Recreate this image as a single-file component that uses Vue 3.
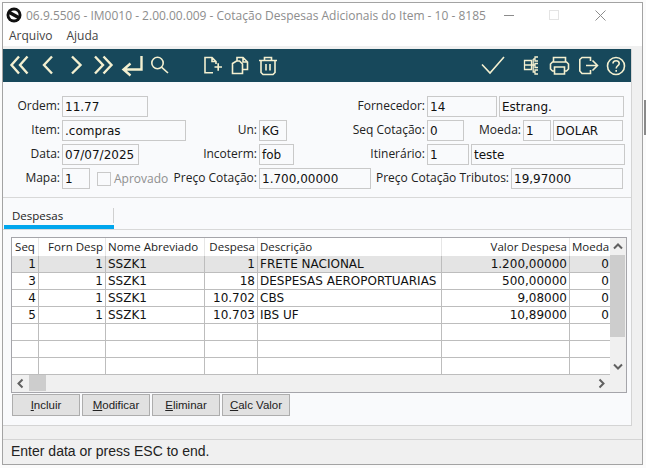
<script setup>
const form = [
  [
    { l: 'Ordem:', lw: 57, v: '11.77', w: 86 },
    { l: 'Fornecedor:', lw: 277, v: '14', w: 70 },
    { v: 'Estrang.', w: 125 }
  ],
  [
    { l: 'Item:', lw: 57, v: '.compras', w: 124 },
    { l: 'Un:', lw: 71, v: 'KG', w: 28 },
    { l: 'Seq Cotação:', lw: 138, v: '0', w: 37 },
    { l: 'Moeda:', lw: 57, v: '1', w: 28 },
    { v: 'DOLAR', w: 70 }
  ],
  [
    { l: 'Data:', lw: 57, v: '07/07/2025', w: 77 },
    { l: 'Incoterm:', lw: 118, v: 'fob', w: 35 },
    { l: 'Itinerário:', lw: 131, v: '1', w: 42 },
    { v: 'teste', w: 154 }
  ]
]
const cols = [
  { t: 'Seq', a: 'c' },
  { t: 'Forn Desp', a: 'r' },
  { t: 'Nome Abreviado', a: 'l' },
  { t: 'Despesa', a: 'r' },
  { t: 'Descrição', a: 'l' },
  { t: 'Valor Despesa', a: 'r' },
  { t: 'Moeda', a: 'r' }
]
const rows = [
  ['1', '1', 'SSZK1', '1', 'FRETE NACIONAL', '1.200,00000', '0'],
  ['3', '1', 'SSZK1', '18', 'DESPESAS AEROPORTUARIAS', '500,00000', '0'],
  ['4', '1', 'SSZK1', '10.702', 'CBS', '9,08000', '0'],
  ['5', '1', 'SSZK1', '10.703', 'IBS UF', '10,89000', '0'],
  ['', '', '', '', '', '', ''],
  ['', '', '', '', '', '', ''],
  ['', '', '', '', '', '', '']
]
const aligns = ['r', 'r', 'l', 'r', 'l', 'r', 'r']
const buttons = [
  ['I', 'ncluir'],
  ['M', 'odificar'],
  ['E', 'liminar'],
  ['C', 'alc Valor']
]
</script>

<template>
  <div class="page">
    <div class="window">
      <header class="titlebar">
        <svg class="logo" viewBox="0 0 16 16" width="16" height="16">
          <circle cx="8" cy="8" r="7.5" fill="#111" />
          <circle cx="8" cy="8" r="4.6" fill="#fff" />
          <path d="M3 5.2 L13 10.8" stroke="#111" stroke-width="3.4" />
        </svg>
        <span class="title">06.9.5506 - IM0010 - 2.00.00.009 - Cotação Despesas Adicionais do Item - 10 - 8185</span>
        <div class="controls">
          <svg viewBox="0 0 120 24" width="120" height="24" fill="none">
            <path d="M0 12.5H10" stroke="#8c8c8c" />
            <rect x="45.5" y="7.5" width="9" height="9" stroke="#e4e4e4" />
            <path d="M91.5 7.5L101.5 17.5M101.5 7.5L91.5 17.5" stroke="#8c8c8c" />
          </svg>
        </div>
      </header>
      <nav class="menu">
        <span>Arquivo</span>
        <span>Ajuda</span>
      </nav>
      <div class="band"></div>

      <main class="panel">
        <div class="toolbar">
          <svg class="ic" viewBox="5 49 28 33"><path d="M19 56.5 11.5 65 19 73.5M27.5 56.5 20 65 27.5 73.5" class="s25" /></svg>
          <svg class="ic" viewBox="33 49 28 33"><path d="M52 56.5 44 65 52 73.5" class="s25" /></svg>
          <svg class="ic" viewBox="61 49 28 33"><path d="M72 56.5 80.5 65 72 73.5" class="s25" /></svg>
          <svg class="ic" viewBox="89 49 28 33"><path d="M95 56.5 103 65 95 73.5M103.500 56.5 111.500 65 103.500 73.5" class="s25" /></svg>
          <svg class="ic" viewBox="117 49 28 33"><path d="M141.500 56V69.500H124M130.500 63.500 123.500 69.500 130.500 75.500" class="s25" /></svg>
          <svg class="ic" viewBox="145 49 28 33"><circle cx="157.500" cy="63" r="5.700" class="s15" /><path d="M161.500 67.200 168 73" class="s15" /></svg>
          <svg class="ic g2" viewBox="197 49 28 33"><path d="M213 72.800H205V57.500H212L216 61.500V64M212 57.500V61.500H216M214.500 67H222M218.200 63.200V70.800" class="s15" /></svg>
          <svg class="ic" viewBox="225 49 28 33"><path d="M237 61V57.500H243L247.500 62V69.500H242.500M243 57.500V62H247.500M232.500 63.500 236.500 61H239.500L242.500 64V73.500H232.500Z" class="s15" /></svg>
          <svg class="ic" viewBox="253 49 28 33"><path d="M259 60.500H277M264.500 60V57.500H271.500V60M261 60.500V72.500L263 74.500H273L275 72.500V60.500M266 64V70.500M270 64V70.500" class="s15" /></svg>
          <span class="spacer"></span>
          <svg class="ic" viewBox="478 49 28 33"><path d="M481 64.500 489 73 503 57" class="s15" /></svg>
          <svg class="ic tree" viewBox="509 49 28 33"><path d="M523.500 60.500H530.500V69.500H523.500ZM523.500 65H530.500M534 57H538.500V61H534ZM534 63.500H538.500V67.500H534ZM534 70H538.500V74H534ZM530.500 65H534M532.200 59V72H534M532.200 59H534" class="s1" /></svg>
          <svg class="ic print" viewBox="544 49 28 33"><path d="M552.500 62V57.500H564.500V62M553 71H551.500L549.500 69V64L551.500 62H565.500L567.500 64V69L565.500 71H564M553.500 67H563.500V74H553.500Z" class="s15" /></svg>
          <svg class="ic exit" viewBox="574 49 28 33"><path d="M589.500 61V57.500H581L578.800 59.500V71L581 73.500H589.500V70M585 65.500H596M591.500 60.500 596.500 65.500 591.500 70.500" class="s15" /></svg>
          <svg class="ic help" viewBox="601 49 28 33"><circle cx="615" cy="66" r="8.500" class="s15" /><path d="M612 63.500C612 59.800 618.200 59.800 618.200 63.500C618.200 65.800 615.200 65.500 615.200 68.500M615.200 70V71.800" class="s15" /></svg>
        </div>

        <section class="form">
          <div v-for="(row, i) in form" :key="i" class="row">
            <template v-for="(f, j) in row" :key="j">
              <label v-if="f.l" class="lab" :style="{ width: f.lw + 'px' }">{{ f.l }}</label>
              <div class="field" :class="{ next: !f.l }" :style="{ width: f.w + 'px' }">{{ f.v }}</div>
            </template>
          </div>
          <div class="row">
            <label class="lab first">Mapa:</label>
            <div class="field mapa">1</div>
            <span class="check"></span>
            <span class="aprov">Aprovado</span>
            <label class="lab preco">Preço Cotação:</label>
            <div class="field pv">1.700,00000</div>
            <label class="lab trib">Preço Cotação Tributos:</label>
            <div class="field tv">19,97000</div>
          </div>
        </section>

        <div class="tabs">
          <div class="tab"><span>Despesas</span></div>
        </div>

        <section class="content">
          <div class="table">
            <div class="tbody">
              <div class="main">
                <div class="grid head">
                  <div v-for="c in cols" :key="c.t" class="hc" :class="c.a">{{ c.t }}</div>
                </div>
                <div v-for="(r, i) in rows" :key="i" class="grid line" :class="{ sel: i === 0 }">
                  <div v-for="(c, k) in r" :key="k" class="td" :class="aligns[k]">{{ c }}</div>
                </div>
              </div>
              <div class="vbar">
                <svg class="arr" viewBox="0 0 16 17" width="16" height="17"><path d="M4 10.500 8 6.500 12 10.500" class="a" /></svg>
                <div class="vthumb"></div>
                <div class="vrest"></div>
                <svg class="arr" viewBox="0 0 16 17" width="16" height="17"><path d="M4 6.500 8 10.500 12 6.500" class="a" /></svg>
              </div>
            </div>
            <div class="hbar">
              <svg class="arr" viewBox="0 0 17 17" width="17" height="17"><path d="M10.500 4.500 6.500 8.500 10.500 12.500" class="a" /></svg>
              <div class="hthumb"></div>
              <div class="vrest"></div>
              <svg class="arr" viewBox="0 0 17 17" width="17" height="17"><path d="M6.500 4.500 10.500 8.500 6.500 12.500" class="a" /></svg>
              <div class="corner"></div>
            </div>
          </div>
          <div class="buttons">
            <button v-for="b in buttons" :key="b[0]" class="btn"><u>{{ b[0] }}</u>{{ b[1] }}</button>
          </div>
        </section>
      </main>

      <div class="gap"></div>
      <footer class="status">Enter data or press ESC to end.</footer>
    </div>
    <div class="strip"><div class="strip-thumb"></div></div>
  </div>
</template>

<style>
html, body { margin: 0; background: #fbfbfb; }
</style>

<style scoped>
.page {
  display: flex;
  width: 646px;
  height: 468px;
  padding: 2px 0 0 2px;
  box-sizing: border-box;
  overflow: hidden;
}
.window {
  width: 641px;
  height: 463px;
  box-sizing: border-box;
  border: 1px solid #a3a3a3;
  background: #f0f0f0;
  display: flex;
  flex-direction: column;
  flex: none;
}
.strip { flex: none; width: 3px; padding-top: 98px; }
.strip-thumb { width: 2px; height: 35px; margin-left: 1px; background: #8a8a8a; }

.titlebar {
  height: 24px;
  background: #fff;
  display: flex;
  align-items: center;
  flex: none;
  padding-left: 3px;
  position: relative;
}
.logo { margin-right: 4px; flex: none; }
.title { font: 12px "Open Sans", sans-serif; color: #8d8d8d; white-space: nowrap; }
.controls { margin-left: auto; margin-right: 18px; height: 24px; }
.controls svg { display: block; }

.menu {
  height: 19px;
  background: #fff;
  flex: none;
  display: flex;
  gap: 14px;
  padding-left: 6px;
  font: 12px "Open Sans", sans-serif;
  color: #444;
  line-height: 17px;
}
.band { height: 3px; flex: none; }

.panel {
  width: 629px;
  height: 377px;
  flex: none;
  box-sizing: border-box;
  background: #f9fafc;
  border-right: 1px solid #d4d4d4;
  border-bottom: 1px solid #d4d4d4;
  display: flex;
  flex-direction: column;
}

.toolbar {
  height: 33px;
  flex: none;
  background: #17485b;
  display: flex;
  padding-left: 2px;
}
.ic { width: 28px; height: 33px; flex: none; display: block; fill: none; stroke: #f4f0d0; }
.s25 { stroke-width: 2.4; }
.s15 { stroke-width: 1.6; }
.s1 { stroke-width: 1.3; }
.g2 { margin-left: 24px; }
.spacer { flex: 1; }
.tree { margin-left: 3px; }
.print { margin-left: 7px; }
.exit { margin-left: 2px; }
.help { margin-left: -1px; margin-right: 1px; }

.form {
  height: 116px;
  flex: none;
  box-sizing: border-box;
  border-bottom: 1px solid #d8d8d8;
  padding-top: 14px;
  display: flex;
  flex-direction: column;
  gap: 3px;
}
.row { display: flex; height: 21px; }
.lab {
  flex: none;
  text-align: right;
  font: 12px "Open Sans", sans-serif;
  color: #222;
  line-height: 19px;
  margin-right: 2px;
  white-space: nowrap;
}
.field {
  flex: none;
  box-sizing: border-box;
  height: 21px;
  border: 1px solid #c9c9c9;
  padding-left: 2px;
  font: 12px "DejaVu Sans", sans-serif;
  color: #111;
  line-height: 20px;
  white-space: nowrap;
  overflow: hidden;
}
.next { margin-left: 2px; }
.first { width: 57px; }
.mapa { width: 28px; }
.check {
  width: 12px;
  height: 12px;
  border: 1px solid #c9c9c9;
  margin: 4px 0 0 7px;
  flex: none;
}
.aprov {
  font: 12px "Open Sans", sans-serif;
  color: #8f8f8f;
  margin-left: 3px;
  line-height: 21px;
  width: 46px;
  flex: none;
}
.preco { width: 97px; }
.pv { width: 112px; }
.trib { width: 138px; }
.tv { width: 112px; }

.tabs {
  height: 32px;
  flex: none;
  box-sizing: border-box;
  border-bottom: 1px solid #d8d8d8;
  padding: 10px 0 0 1px;
}
.tab {
  width: 110px;
  height: 21px;
  box-sizing: border-box;
  border-bottom: 4px solid #00a6ed;
  position: relative;
  font: 11.500px "Open Sans", sans-serif;
  color: #222;
  padding-left: 8px;
  line-height: 16px;
}
.tab::after {
  content: "";
  position: absolute;
  right: 0;
  top: 0;
  height: 15px;
  width: 1px;
  background: #d0d0d0;
}

.content {
  flex: 1;
  padding: 7px 0 0 8px;
  display: flex;
  flex-direction: column;
}
.table {
  width: 616px;
  height: 156px;
  box-sizing: border-box;
  border: 1px solid #a5a5aa;
  background: #f0f0f0;
  display: flex;
  flex-direction: column;
  flex: none;
}
.tbody { display: flex; height: 137px; flex: none; }
.main { width: 598px; flex: none; background: #fff; }
.grid {
  display: grid;
  grid-template-columns: 27px 67px 99px 53px 184px 128px 40px;
}
.head { height: 18px; }
.hc {
  font: 11.500px "Open Sans", sans-serif;
  color: #222;
  line-height: 18px;
  border-right: 1px solid #e6e6e6;
  white-space: nowrap;
  overflow: hidden;
  padding: 0 2px;
}
.hc:last-child { border-right: 0; }
.line { height: 17px; box-sizing: border-box; border-bottom: 1px solid #bdbdbd; }
.line.sel { background: #e4e4e4; }
.td {
  font: 12px "DejaVu Sans", sans-serif;
  color: #111;
  line-height: 16px;
  border-right: 1px solid #bdbdbd;
  padding: 0 2px;
  white-space: nowrap;
  overflow: hidden;
}
.td:last-child { border-right: 0; padding-right: 1px; }
.l { text-align: left; }
.r { text-align: right; }
.c { text-align: center; }

.vbar { width: 16px; flex: none; display: flex; flex-direction: column; }
.arr { display: block; flex: none; }
.vthumb { height: 82px; width: 15px; background: #cdcdcd; flex: none; }
.vrest { flex: 1; }
.a { fill: none; stroke: #606060; stroke-width: 2; }
.hbar { height: 17px; flex: none; display: flex; }
.hthumb { width: 17px; height: 16px; background: #cdcdcd; flex: none; }
.corner { width: 16px; flex: none; }

.buttons { display: flex; gap: 2px; padding: 1px 0 0 1px; }
.btn {
  width: 68px;
  height: 22px;
  box-sizing: border-box;
  border: 1px solid #adadad;
  background: #e1e1e1;
  padding: 0;
  font: 11.500px "Liberation Sans", sans-serif;
  color: #222;
}
.gap { height: 13px; flex: none; }
.status {
  flex: 1;
  border-top: 1px solid #d4d4d4;
  font: 14px "Liberation Sans", sans-serif;
  color: #222;
  padding-left: 8px;
  line-height: 22px;
}
</style>
